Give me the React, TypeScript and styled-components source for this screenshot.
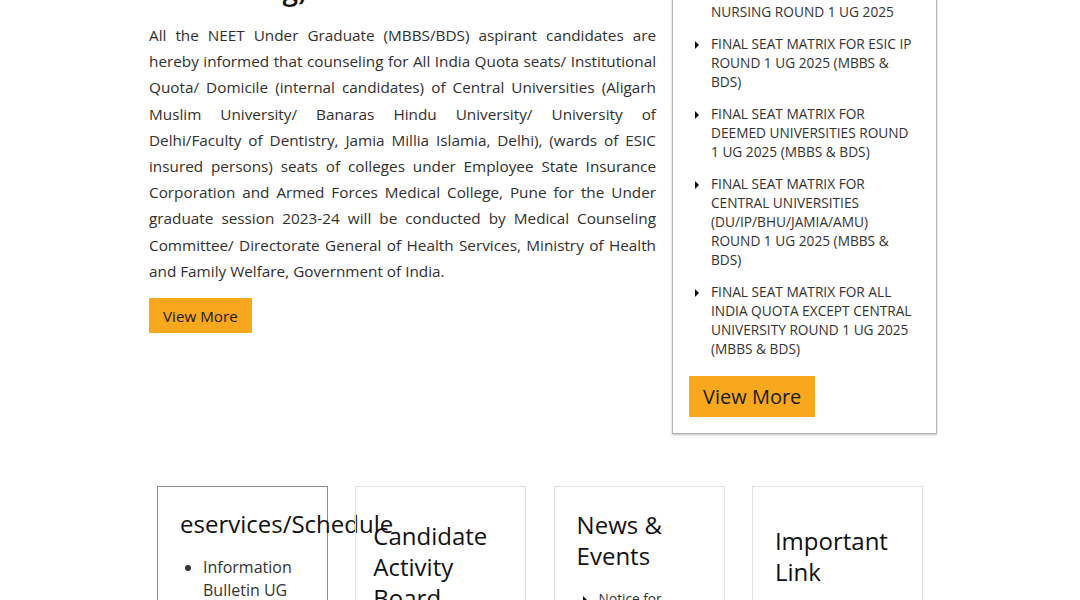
import React, { useLayoutEffect } from "react";
import styled, { createGlobalStyle } from "styled-components";

const GlobalStyle = createGlobalStyle`
  html, body {
    margin: 0;
    padding: 0;
    background: #fff;
    font-family: "Open Sans", "Noto Sans", sans-serif;
    color: #333;
  }
  * {
    box-sizing: border-box;
  }
`;

const accent = "#f9a81e";

const Page = styled.div`
  padding: 20px 0 200px;
`;

const Intro = styled.section`
  display: flex;
  align-items: flex-start;
  gap: 16px;
  width: 788px;
  margin-left: 149px;
`;

const LeftCol = styled.div`
  width: 507px;
  flex-shrink: 0;
`;

const Title = styled.h2`
  margin: 0 0 15px;
  font-size: 28px;
  line-height: 36px;
  font-weight: 600;
  color: #111;
`;

const Lead = styled.p`
  margin: 0;
  font-size: 15.3px;
  line-height: 26.2px;
  text-align: justify;
  color: #303030;
`;

const Button = styled.button<{ $big?: boolean }>`
  display: inline-flex;
  align-items: center;
  border: none;
  border-radius: 1px;
  background: ${accent};
  color: #1a1a1a;
  font-family: inherit;
  font-size: ${(p) => (p.$big ? "20px" : "15.2px")};
  height: ${(p) => (p.$big ? "41px" : "35px")};
  padding: 0 14px;
  margin-top: ${(p) => (p.$big ? "5px" : "14px")};
  cursor: pointer;
`;

const NoticeBox = styled.aside`
  width: 265px;
  flex-shrink: 0;
  border: 1px solid #b5b5b5;
  box-shadow: 0 1px 2px rgba(0, 0, 0, 0.25);
  padding: 12px 20px 16px 16px;
`;

const BoxTitle = styled.h3`
  margin: 0 0 11px;
  font-size: 18px;
  line-height: 24px;
  font-weight: 600;
  color: #111;
`;

const NoticeList = styled.ul`
  list-style: none;
  margin: 0;
  padding: 0;
`;

const NoticeItem = styled.li`
  position: relative;
  padding-left: 22px;
  margin-bottom: 13px;
  font-size: 13.7px;
  line-height: 19px;
  color: #333;

  &::before {
    content: "";
    position: absolute;
    left: 6px;
    top: 6.5px;
    border-left: 4.5px solid #111;
    border-top: 4px solid transparent;
    border-bottom: 4px solid transparent;
  }
`;

const Cards = styled.section`
  display: flex;
  gap: 27.3px;
  width: 766px;
  margin: 52px 0 0 157px;
`;

const Card = styled.div<{ $active?: boolean; $top: number; $side?: number }>`
  width: 171px;
  flex-shrink: 0;
  min-height: 320px;
  border: 1px solid ${(p) => (p.$active ? "#8f8f8f" : "#e0e0e0")};
  padding: ${(p) => p.$top}px ${(p) => p.$side ?? 22}px 20px;
`;

const CardTitle = styled.h3`
  margin: 0;
  font-size: 24px;
  line-height: 31px;
  font-weight: 500;
  color: #111;
`;

const CardList = styled.ul`
  margin: 17px 0 0;
  padding-left: 23px;
  font-size: 16px;
  line-height: 23px;
  color: #333;
`;

const SmallList = styled.ul`
  list-style: none;
  margin: 18px 0 0;
  padding: 0;
`;

const notices = [
  "FINAL SEAT MATRIX FOR BSC NURSING ROUND 1 UG 2025",
  "FINAL SEAT MATRIX FOR ESIC IP ROUND 1 UG 2025 (MBBS & BDS)",
  "FINAL SEAT MATRIX FOR DEEMED UNIVERSITIES ROUND 1 UG 2025 (MBBS & BDS)",
  "FINAL SEAT MATRIX FOR CENTRAL UNIVERSITIES (DU/IP/BHU/JAMIA/AMU) ROUND 1 UG 2025 (MBBS & BDS)",
  "FINAL SEAT MATRIX FOR ALL INDIA QUOTA EXCEPT CENTRAL UNIVERSITY ROUND 1 UG 2025 (MBBS & BDS)",
];

export default function App() {
  useLayoutEffect(() => {
    window.scrollTo(0, 85);
  }, []);

  return (
    <Page>
      <GlobalStyle />
      <Intro>
        <LeftCol>
          <Title>
            Medical Counseling (UG
            <br />
            Counseling)
          </Title>
          <Lead>
            All the NEET Under Graduate (MBBS/BDS) aspirant candidates are
            hereby informed that counseling for All India Quota seats/
            Institutional Quota/ Domicile (internal candidates) of Central
            Universities (Aligarh Muslim University/ Banaras Hindu University/
            University of Delhi/Faculty of Dentistry, Jamia Millia Islamia,
            Delhi), (wards of ESIC insured persons) seats of colleges under
            Employee State Insurance Corporation and Armed Forces Medical
            College, Pune for the Under graduate session 2023-24 will be
            conducted by Medical Counseling Committee/ Directorate General of
            Health Services, Ministry of Health and Family Welfare, Government
            of India.
          </Lead>
          <Button>View More</Button>
        </LeftCol>
        <NoticeBox>
          <BoxTitle>Current Events</BoxTitle>
          <NoticeList>
            {notices.map((n) => (
              <NoticeItem key={n}>{n}</NoticeItem>
            ))}
          </NoticeList>
          <Button $big>View More</Button>
        </NoticeBox>
      </Intro>

      <Cards>
        <Card $active $top={21}>
          <CardTitle>eservices/Schedule</CardTitle>
          <CardList>
            <li>Information Bulletin UG 2025</li>
            <li>Schedule UG 2025</li>
          </CardList>
        </Card>
        <Card $top={33} $side={17}>
          <CardTitle>Candidate Activity Board</CardTitle>
        </Card>
        <Card $top={22}>
          <CardTitle>News &amp; Events</CardTitle>
          <SmallList>
            <NoticeItem>Notice for candidates</NoticeItem>
          </SmallList>
        </Card>
        <Card $top={38}>
          <CardTitle>Important Link</CardTitle>
        </Card>
      </Cards>
    </Page>
  );
}
